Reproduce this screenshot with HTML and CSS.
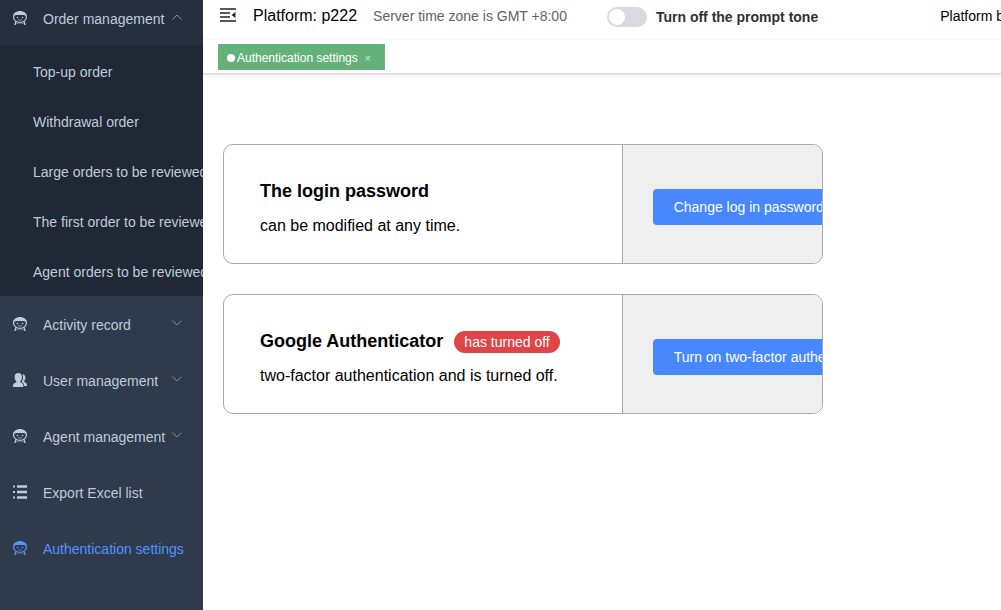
FILE: index.html
```html
<!DOCTYPE html>
<html lang="en">
<head>
  <meta charset="UTF-8">
  <meta name="viewport" content="width=device-width, initial-scale=1.0">
  <title>Authentication settings</title>
  <link rel="stylesheet" href="styles.css">
</head>
<body>
  <svg class="symbols" aria-hidden="true">
    <symbol id="face" viewBox="0 0 14 14">
      <path d="M7 0C3.200 0 0 2.200 0 5.800c0 2 .9 3.500 2.300 4.500L1.200 14h1.400l.9-2.900c1 .4 2.300.6 3.500.6s2.500-.2 3.500-.6l.9 2.900h1.400l-1.100-3.700C13.100 9.300 14 7.800 14 5.800 14 2.200 10.800 0 7 0zM3.200 4h7.600c1.300 0 2 .8 2 2C12.800 9 10.300 10.800 7 10.800S1.200 9 1.200 6C1.200 4.800 1.900 4 3.200 4z" fill="currentColor" fill-rule="evenodd"/>
      <circle cx="4.500" cy="6.500" r=".8" fill="currentColor"/>
      <circle cx="9.500" cy="6.500" r=".8" fill="currentColor"/>
      <path d="M5 8.500c1.200.9 2.800.9 4 0M3.500 12.600c2-1 5-1 7 0" fill="none" stroke="currentColor" stroke-width=".7"/>
    </symbol>
    <symbol id="users" viewBox="0 0 14 14">
      <path d="M5.300 0C7.500 0 9 1.600 9 4c0 1.800-.7 3.300-1.700 4.200v1.100c1.700.7 3 1.400 3 3V14H0v-1.700c0-1.600 1.500-2.300 3.300-3V8.200C2.300 7.300 1.600 5.800 1.600 4c0-2.400 1.500-4 3.700-4z" fill="currentColor"/>
      <path d="M9.300 1.200c2 .1 3.100 1.500 3.100 3.400 0 1.500-.5 2.700-1.200 3.500v.8c1.600.8 2.800 1.500 2.800 3.100v1h-2.900c0-2.200-.7-3.200-2.500-4.100C9.600 7.500 10 5.900 10 4.200c0-1.200-.2-2.200-.7-3z" fill="currentColor"/>
    </symbol>
    <symbol id="list" viewBox="0 0 14 14">
      <path d="M0 .5h2v2H0zM4 .3h10v2.400H4zM0 6h2v2H0zM4 5.800h10v2.400H4zM0 11.500h2v2H0zM4 11.300h10v2.400H4z" fill="currentColor"/>
    </symbol>
    <symbol id="arrow" viewBox="0 0 10 6">
      <path d="M.5.500 5 5 9.500.5" fill="none" stroke="currentColor"/>
    </symbol>
  </svg>

  <nav class="sidebar">
    <ul class="menu">
      <li>
        <a class="menu-item open" href="#"><svg class="icon"><use href="#face"/></svg>Order management<svg class="arrow"><use href="#arrow"/></svg></a>
        <ul class="submenu">
          <li><a href="#">Top-up order</a></li>
          <li><a href="#">Withdrawal order</a></li>
          <li><a href="#">Large orders to be reviewed</a></li>
          <li><a href="#">The first order to be reviewed</a></li>
          <li><a href="#">Agent orders to be reviewed</a></li>
        </ul>
      </li>
      <li><a class="menu-item" href="#"><svg class="icon"><use href="#face"/></svg>Activity record<svg class="arrow"><use href="#arrow"/></svg></a></li>
      <li><a class="menu-item" href="#"><svg class="icon"><use href="#users"/></svg>User management<svg class="arrow"><use href="#arrow"/></svg></a></li>
      <li><a class="menu-item" href="#"><svg class="icon"><use href="#face"/></svg>Agent management<svg class="arrow"><use href="#arrow"/></svg></a></li>
      <li><a class="menu-item" href="#"><svg class="icon"><use href="#list"/></svg>Export Excel list</a></li>
      <li><a class="menu-item active" href="#"><svg class="icon"><use href="#face"/></svg>Authentication settings</a></li>
    </ul>
  </nav>

  <div class="main">
    <header class="navbar">
      <button class="hamburger" aria-label="Collapse menu">
        <svg width="16" height="14" viewBox="0 0 16 14">
          <path d="M0 1h16M0 5h10M0 9h10M0 13h16" fill="none" stroke="#222" stroke-width="1.600"/>
          <path d="M15.500 4v6L11.500 7z" fill="#222"/>
        </svg>
      </button>
      <span class="platform">Platform: p222</span>
      <span class="timezone">Server time zone is GMT +8:00</span>
      <label class="tone"><input type="checkbox" class="switch">Turn off the prompt tone</label>
      <span class="balance">Platform balance</span>
    </header>

    <div class="tabs">
      <div class="tab"><a href="#">Authentication settings</a><button class="close" aria-label="Close tab">×</button></div>
    </div>

    <main class="content">
      <section class="card">
        <div class="card-info">
          <h2>The login password</h2>
          <p>can be modified at any time.</p>
        </div>
        <div class="card-action">
          <button class="btn">Change log in password</button>
        </div>
      </section>
      <section class="card">
        <div class="card-info">
          <h2>Google Authenticator <span class="badge">has turned off</span></h2>
          <p>two-factor authentication and is turned off.</p>
        </div>
        <div class="card-action">
          <button class="btn">Turn on two-factor authentication</button>
        </div>
      </section>
    </main>
  </div>
</body>
</html>
```
FILE: styles.css
```css
* {
  box-sizing: border-box;
}

body {
  display: flex;
  min-height: 100vh;
  margin: 0;
  overflow: hidden;
  background-color: #fff;
  font-family: "Liberation Sans", Arial, sans-serif;
  font-size: 14px;
  color: #000;
}

a {
  color: inherit;
  text-decoration: none;
}

button {
  padding: 0;
  border: none;
  background: none;
  font-family: inherit;
  cursor: pointer;
}

.symbols {
  display: none;
}

/* sidebar */
.sidebar {
  flex: none;
  width: 203px;
  overflow: hidden;
  background-color: #2f3a4c;
  color: #bfcbd9;
  white-space: nowrap;
}

.menu, .submenu {
  margin: 0;
  padding: 0;
  list-style: none;
}

/* the menu is scrolled down a little */
.menu {
  margin-top: -10px;
}

.menu-item {
  display: flex;
  align-items: center;
  height: 56px;
  padding: 2px 21px 0 13px;
}

.menu-item.open {
  background-color: #262f3e;
}

.menu-item.active {
  padding-right: 0;
  color: #5294ff;
}

.icon {
  flex: none;
  width: 14px;
  height: 14px;
  margin: 0 16px 2px 0;
}

.arrow {
  flex: none;
  width: 10px;
  height: 6px;
  margin: 0 0 4px auto;
  color: #808a98;
}

.open .arrow {
  transform: rotate(180deg);
}

.submenu {
  background-color: #212835;
}

.submenu a {
  display: block;
  height: 50px;
  padding-left: 33px;
  line-height: 52px;
}

/* top bar */
.main {
  flex: 1;
  min-width: 0;
}

.navbar {
  display: flex;
  align-items: center;
  height: 40px;
  padding: 0 0 8px 17px;
  overflow: hidden;
  white-space: nowrap;
}

.hamburger {
  display: flex;
  margin: 0 17px 2px 0;
}

.platform {
  margin-right: 16px;
  font-size: 16px;
}

.timezone {
  margin-right: 40px;
  color: #606266;
}

.tone {
  display: flex;
  align-items: center;
  margin-right: 122px;
  padding-top: 2px;
  font-weight: bold;
  color: #303133;
}

.switch {
  appearance: none;
  width: 40px;
  height: 20px;
  margin: 0 9px 0 0;
  border-radius: 10px;
  background-color: #d7dae2;
}

.switch::before {
  content: "";
  display: block;
  width: 16px;
  height: 16px;
  margin: 2px;
  border-radius: 50%;
  background-color: #fff;
}

.switch:checked::before {
  margin-left: 22px;
}

/* open pages */
.tabs {
  height: 34px;
  padding: 4px 15px;
  border-bottom: 1px solid #d8dce5;
  box-shadow: 0 1px 3px rgba(0, 0, 0, 0.12), 0 0 3px rgba(0, 0, 0, 0.04);
}

.tab {
  display: inline-flex;
  align-items: center;
  height: 26px;
  padding: 2px 14px 0 9px;
  background-color: #65b17a;
  font-size: 12px;
  color: #fff;
}

.tab::before {
  content: "";
  width: 8px;
  height: 8px;
  margin-right: 2px;
  border-radius: 50%;
  background-color: #fff;
}

.close {
  margin-left: 7px;
  font-size: 10px;
  color: #d5ebdb;
}

/* settings cards */
.content {
  display: flex;
  flex-direction: column;
  gap: 30px;
  padding: 70px 20px;
}

.card {
  display: grid;
  grid-template-columns: minmax(0, 2fr) minmax(0, 1fr);
  max-width: 600px;
  min-height: 120px;
  overflow: hidden;
  border: 1px solid #aaa;
  border-radius: 10px;
}

.card-info {
  padding: 34px 36px 24px;
  border-right: 1px solid #aaa;
}

.card-info h2 {
  display: flex;
  align-items: center;
  height: 24px;
  margin: 0 0 12px;
  font-size: 18px;
}

.card-info p {
  margin: 0;
  font-size: 16px;
  line-height: 22px;
}

.badge {
  height: 22px;
  margin: 2px 0 0 11px;
  padding: 0 10px;
  border-radius: 11px;
  background-color: #df4446;
  font-size: 14px;
  font-weight: normal;
  line-height: 22px;
  color: #fff;
}

.card-action {
  display: flex;
  align-items: center;
  padding: 6px 0 0 30px;
  background-color: #efefef;
}

.btn {
  flex: none;
  height: 36px;
  padding: 0 21px;
  border-radius: 4px;
  background-color: #4787ff;
  font-size: 14px;
  color: #fff;
}
```
